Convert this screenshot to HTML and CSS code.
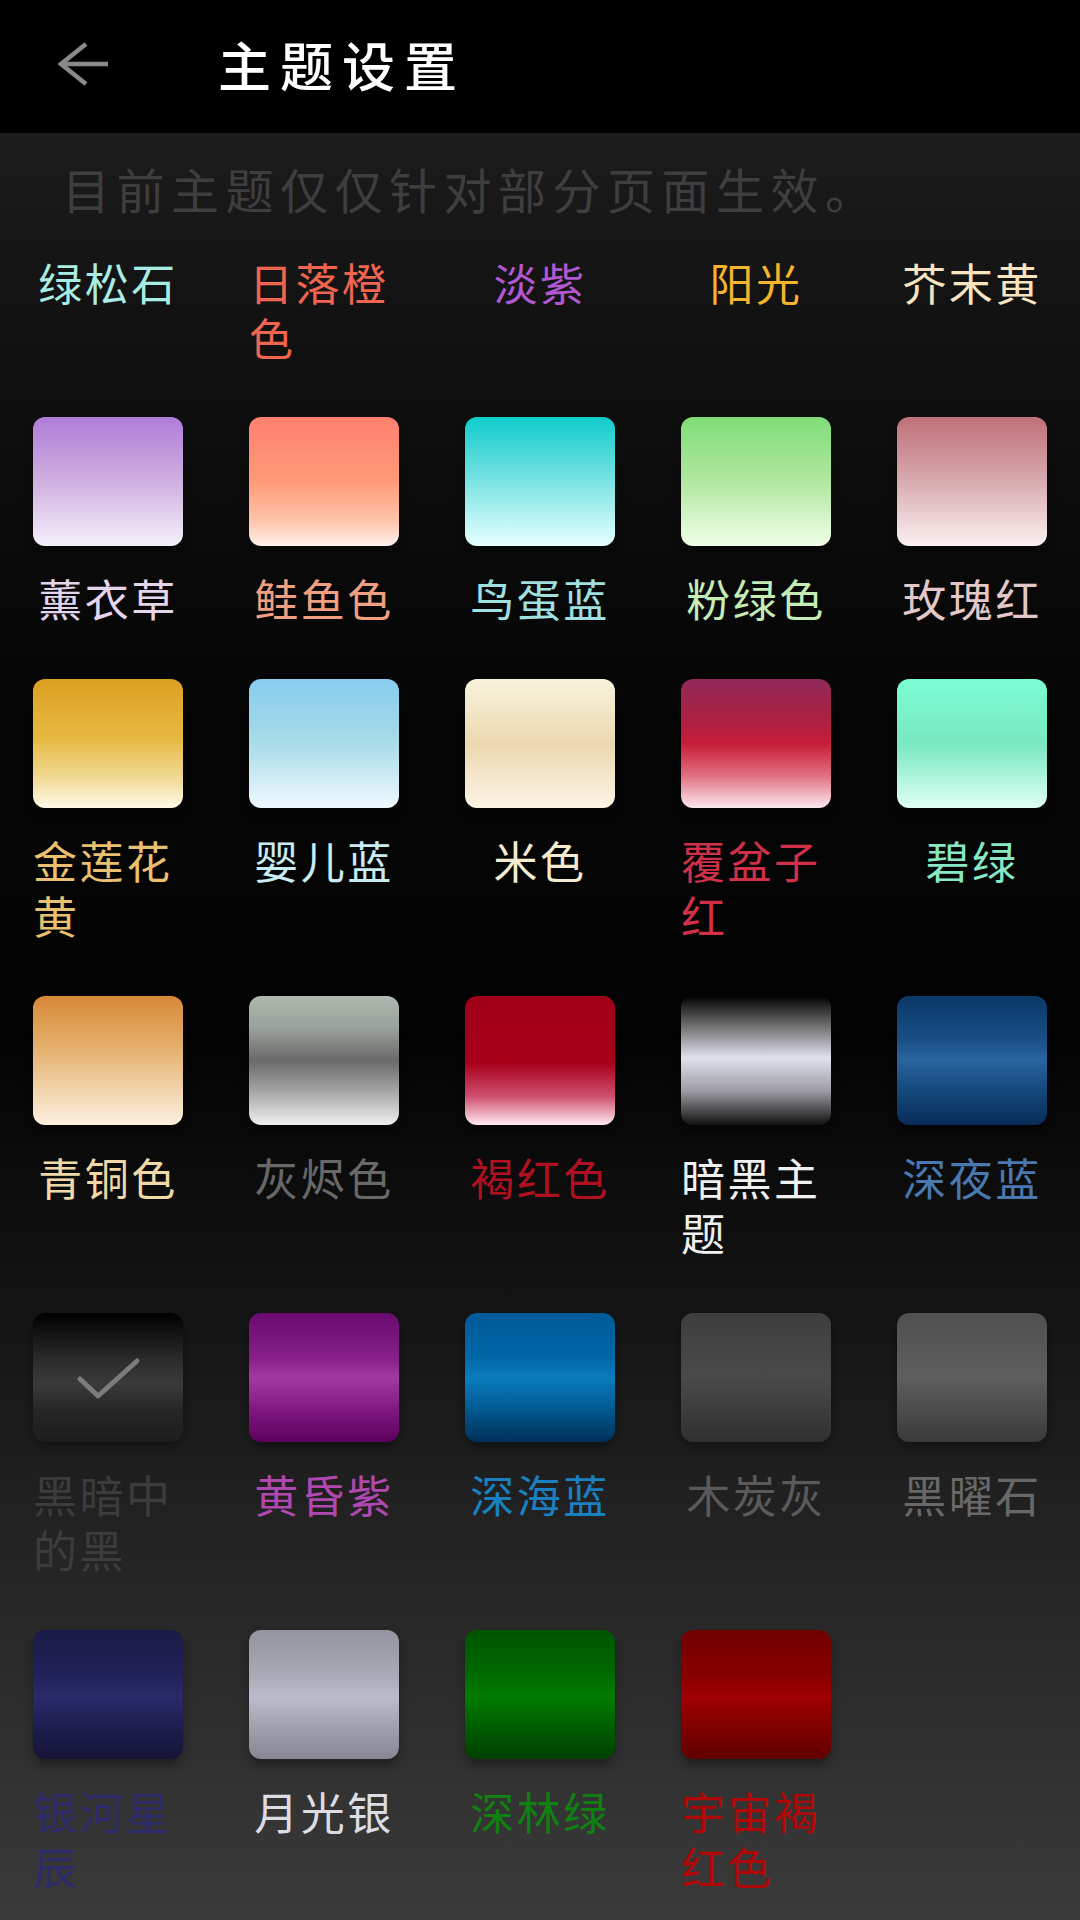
FILE: index.html
```html
<!DOCTYPE html>
<html lang="zh-CN">
<head>
<meta charset="utf-8">
<title>主题设置</title>
<link rel="stylesheet" href="styles.css">
</head>
<body>
<div class="screen">
  <header class="topbar">
    <svg class="back" width="56" height="56" viewBox="0 0 56 56" aria-hidden="true">
      <polyline points="30,8 5,28 30,48" fill="none" stroke="#8a8a8a" stroke-width="4.5"/>
      <line x1="5" y1="28" x2="52" y2="28" stroke="#8a8a8a" stroke-width="4.5"/>
    </svg>
    <h1 class="title">主题设置</h1>
  </header>
  <main class="content">
    <p class="notice">目前主题仅仅针对部分页面生效。</p>
    <div class="grid">
      <div class="cell cell--partial th-turquoise"><span class="label">绿松石</span></div>
      <div class="cell cell--partial th-sunset"><span class="label">日落橙色</span></div>
      <div class="cell cell--partial th-lilac"><span class="label">淡紫</span></div>
      <div class="cell cell--partial th-sun"><span class="label">阳光</span></div>
      <div class="cell cell--partial th-mustard"><span class="label">芥末黄</span></div>

      <div class="cell th-lavender"><div class="swatch"></div><span class="label">薰衣草</span></div>
      <div class="cell th-salmon"><div class="swatch"></div><span class="label">鲑鱼色</span></div>
      <div class="cell th-robin"><div class="swatch"></div><span class="label">鸟蛋蓝</span></div>
      <div class="cell th-mint"><div class="swatch"></div><span class="label">粉绿色</span></div>
      <div class="cell th-rose"><div class="swatch"></div><span class="label">玫瑰红</span></div>

      <div class="cell th-gold"><div class="swatch"></div><span class="label">金莲花黄</span></div>
      <div class="cell th-baby"><div class="swatch"></div><span class="label">婴儿蓝</span></div>
      <div class="cell th-beige"><div class="swatch"></div><span class="label">米色</span></div>
      <div class="cell th-raspberry"><div class="swatch"></div><span class="label">覆盆子红</span></div>
      <div class="cell th-jade"><div class="swatch"></div><span class="label">碧绿</span></div>

      <div class="cell th-bronze"><div class="swatch"></div><span class="label">青铜色</span></div>
      <div class="cell th-ash"><div class="swatch"></div><span class="label">灰烬色</span></div>
      <div class="cell th-maroon"><div class="swatch"></div><span class="label">褐红色</span></div>
      <div class="cell th-dark"><div class="swatch"></div><span class="label">暗黑主题</span></div>
      <div class="cell th-midnight"><div class="swatch"></div><span class="label">深夜蓝</span></div>

      <div class="cell th-black">
        <div class="swatch">
          <svg class="check" width="70" height="46" viewBox="0 0 70 46" aria-hidden="true">
            <polyline points="7,24 25,41 64,6" fill="none" stroke="#7c7c7c" stroke-width="5" stroke-linecap="round" stroke-linejoin="round"/>
          </svg>
        </div>
        <span class="label">黑暗中的黑</span>
      </div>
      <div class="cell th-dusk"><div class="swatch"></div><span class="label">黄昏紫</span></div>
      <div class="cell th-ocean"><div class="swatch"></div><span class="label">深海蓝</span></div>
      <div class="cell th-charcoal"><div class="swatch"></div><span class="label">木炭灰</span></div>
      <div class="cell th-obsidian"><div class="swatch"></div><span class="label">黑曜石</span></div>

      <div class="cell th-galaxy"><div class="swatch"></div><span class="label">银河星辰</span></div>
      <div class="cell th-moon"><div class="swatch"></div><span class="label">月光银</span></div>
      <div class="cell th-forest"><div class="swatch"></div><span class="label">深林绿</span></div>
      <div class="cell th-cosmic"><div class="swatch"></div><span class="label">宇宙褐红色</span></div>
    </div>
  </main>
</div>
</body>
</html>
```

FILE: styles.css
```css
* { box-sizing: border-box; }

html, body {
  margin: 0;
  padding: 0;
  background: #000;
}

body {
  font-family: "Noto Sans CJK SC", "Noto Sans", sans-serif;
}

.screen {
  width: 1080px;
  height: 1920px;
  overflow: hidden;
  display: flex;
  flex-direction: column;
}

.topbar {
  height: 133px;
  flex: 0 0 133px;
  background: #000;
  display: flex;
  align-items: center;
  padding-left: 56px;
}

.back {
  display: block;
  margin-bottom: 6px;
  flex: 0 0 auto;
}

.title {
  margin: 0 0 6px 106px;
  color: #ffffff;
  font-size: 53px;
  font-weight: 500;
  letter-spacing: 9px;
  line-height: 60px;
}

.content {
  flex: 1 1 auto;
  background: linear-gradient(180deg,
    #1c1c1c 0%,
    #121212 10%,
    #060606 30%,
    #040404 50%,
    #141414 65%,
    #262626 80%,
    #3c3c3c 100%);
}

.notice {
  margin: 25px 0 0 0;
  padding-left: 62px;
  height: 60px;
  line-height: 60px;
  font-size: 48px;
  letter-spacing: 6.5px;
  color: #3e3e3e;
  white-space: nowrap;
}

.grid {
  display: grid;
  grid-template-columns: repeat(5, 216px);
  padding-top: 37px;
}

.cell {
  display: flex;
  flex-direction: column;
  align-items: center;
  padding-bottom: 53.5px;
}

.cell--partial {
  padding-bottom: 52px;
}

.swatch {
  width: 150px;
  height: 129px;
  border-radius: 12px;
  background: var(--g);
  box-shadow: 0 6px 10px rgba(0, 0, 0, 0.35);
  display: flex;
  align-items: center;
  justify-content: center;
}

.label {
  display: block;
  max-width: 150px;
  margin-top: 24.5px;
  font-size: 44px;
  line-height: 55px;
  letter-spacing: 2.5px;
  text-align: left;
  color: var(--c);
}

.cell--partial .label {
  margin-top: 0;
}

.check { display: block; }

/* label-only themes (row scrolled under the notice) */
.th-turquoise { --c: #a8ece4; }
.th-sunset    { --c: #f06450; }
.th-lilac     { --c: #b058d0; }
.th-sun       { --c: #f5b42c; }
.th-mustard   { --c: #f8e4c0; }

.th-lavender { --c: #e4d4ec; --g: linear-gradient(180deg, #b07cd8 0%, #d0b0e0 50%, #f4f0fc 100%); }
.th-salmon   { --c: #f0a080; --g: linear-gradient(180deg, #ff8070 0%, #ff9a78 50%, #ffc4a8 80%, #fff0ec 100%); }
.th-robin    { --c: #a0e0e0; --g: linear-gradient(180deg, #10cccc 0%, #70e0e0 45%, #e8ffff 100%); }
.th-mint     { --c: #c4ecb4; --g: linear-gradient(180deg, #80dc78 0%, #b0e8a0 50%, #f0ffe8 100%); }
.th-rose     { --c: #e4c8c8; --g: linear-gradient(180deg, #c07078 0%, #d4a4aa 45%, #fcf0f0 100%); }

.th-gold      { --c: #e8c070; --g: linear-gradient(180deg, #dca020 0%, #e6b840 45%, #f0d890 75%, #fff8e8 100%); }
.th-baby      { --c: #c8ecf4; --g: linear-gradient(180deg, #88ccee 0%, #a8dce8 50%, #f0f8ff 100%); }
.th-beige     { --c: #f4ead0; --g: linear-gradient(180deg, #f8f4dc 0%, #ecd8b0 50%, #fcf4e4 100%); }
.th-raspberry { --c: #d03048; --g: linear-gradient(180deg, #902858 0%, #b02040 35%, #c81c38 50%, #e07080 75%, #fde8f0 100%); }
.th-jade      { --c: #88e8c4; --g: linear-gradient(180deg, #7cfcd4 0%, #78e8c0 50%, #e0fff4 100%); }

.th-bronze   { --c: #f0d8a8; --g: linear-gradient(180deg, #d88838 0%, #e4b06c 40%, #fcf0e0 100%); }
.th-ash      { --c: #686868; --g: linear-gradient(180deg, #b0bab0 0%, #9aa09a 25%, #6a6a6a 50%, #a0a0a0 72%, #f0f0f0 100%); }
.th-maroon   { --c: #b01020; --g: linear-gradient(180deg, #a00018 0%, #a8001a 52%, #d05070 78%, #ffeaf0 100%); }
.th-dark     { --c: #f0f0f0; --g: linear-gradient(180deg, #000000 0%, #6a6a6a 22%, #e2e2ee 48%, #9a9aa0 74%, #111111 100%); }
.th-midnight { --c: #4a78b0; --g: linear-gradient(180deg, #0a3868 0%, #1a5088 35%, #2a64a0 50%, #164c80 70%, #082c58 100%); }

.th-black    { --c: #3c3c3c; --g: linear-gradient(180deg, #000000 0%, #2a2a2a 35%, #3a3a3a 55%, #262626 75%, #1c1c1c 100%); }
.th-dusk     { --c: #b048b0; --g: linear-gradient(180deg, #6a0a6e 0%, #862088 35%, #a03aa0 50%, #801880 75%, #5c005c 100%); }
.th-ocean    { --c: #1a80c0; --g: linear-gradient(180deg, #005a98 0%, #0068a8 35%, #0a7cbc 50%, #005890 75%, #003058 100%); }
.th-charcoal { --c: #5a5a5a; --g: linear-gradient(180deg, #3e3e3e 0%, #4a4a4a 50%, #303030 100%); }
.th-obsidian { --c: #686868; --g: linear-gradient(180deg, #505050 0%, #5e5e5e 50%, #3a3a3a 100%); }

.th-galaxy { --c: #2c2c6c; --g: linear-gradient(180deg, #1a1a46 0%, #22225a 35%, #2a2a6a 52%, #1e1e50 75%, #141436 100%); }
.th-moon   { --c: #dcdce4; --g: linear-gradient(180deg, #9494a0 0%, #a8a8b6 35%, #bcbccc 52%, #a0a0ae 75%, #868694 100%); }
.th-forest { --c: #108010; --g: linear-gradient(180deg, #005400 0%, #006a00 35%, #007c00 52%, #005e00 75%, #004000 100%); }
.th-cosmic { --c: #b00808; --g: linear-gradient(180deg, #700000 0%, #880000 35%, #a00000 52%, #800000 75%, #600000 100%); }
```
